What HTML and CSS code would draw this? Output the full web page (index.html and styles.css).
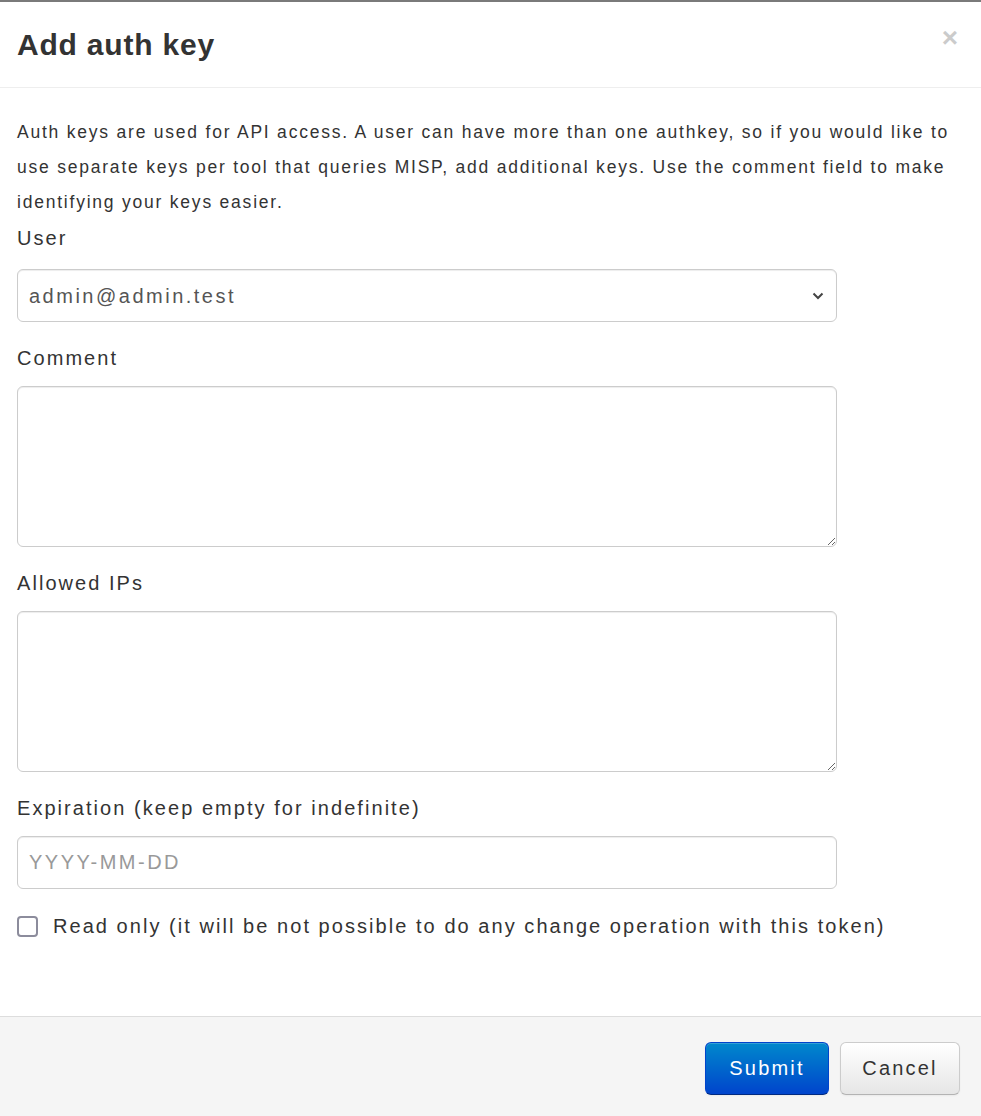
FILE: index.html
```html
<!DOCTYPE html>
<html lang="en">
<head>
    <meta charset="UTF-8">
    <meta name="viewport" content="width=device-width, initial-scale=1.0">
    <title>Add auth key</title>
    <link rel="stylesheet" href="styles.css">
</head>
<body>
    <div class="modal">
        <div class="modal-header">
            <h3>Add auth key</h3>
            <button type="button" class="close">×</button>
        </div>
        <div class="modal-body">
            <p class="intro">Auth keys are used for API access. A user can have more than one authkey, so if you would like to use separate keys per tool that queries MISP, add additional keys. Use the comment field to make identifying your keys easier.</p>
            <form>
                <label for="user">User</label>
                <div class="select-wrap">
                    <select id="user" class="field">
                        <option>admin@admin.test</option>
                    </select>
                    <svg class="chevron" width="12" height="8" viewBox="0 0 12 8">
                        <path d="M1.5 1.5 L6 6 L10.5 1.5" fill="none" stroke="#444" stroke-width="2"/>
                    </svg>
                </div>

                <label for="comment">Comment</label>
                <textarea id="comment" class="field area"></textarea>

                <label for="ips">Allowed IPs</label>
                <textarea id="ips" class="field area"></textarea>

                <label for="expiration">Expiration (keep empty for indefinite)</label>
                <input id="expiration" class="field" type="text" placeholder="YYYY-MM-DD">

                <label class="checkbox">
                    <input type="checkbox">
                    Read only (it will be not possible to do any change operation with this token)
                </label>
            </form>
        </div>
        <div class="modal-footer">
            <button type="button" class="btn btn-primary">Submit</button>
            <button type="button" class="btn btn-cancel">Cancel</button>
        </div>
    </div>
</body>
</html>
```

FILE: styles.css
```css
body {
    margin: 0;
    font-family: "Liberation Sans", Arial, sans-serif;
    color: #333333;
    background-color: #ffffff;
}

.modal {
    border-top: 2px solid #7a7a7a;
    min-height: 1114px;
    display: flex;
    flex-direction: column;
}

.modal-header {
    height: 85px;
    padding: 0 17px;
    border-bottom: 1px solid #eeeeee;
    display: flex;
    align-items: center;
    justify-content: space-between;
}

.modal-header h3 {
    margin: 0;
    font-size: 30px;
    font-weight: bold;
    line-height: 40px;
    letter-spacing: 0.8px;
    color: #333333;
}

.close {
    border: none;
    background: none;
    padding: 0;
    margin-right: 6px;
    margin-top: -14px;
    font-family: "Liberation Sans", Arial, sans-serif;
    font-size: 28px;
    font-weight: bold;
    line-height: 28px;
    color: #000000;
    opacity: 0.2;
}

.modal-body {
    padding: 27px 17px 0;
    flex: 1;
}

.intro {
    margin: 0;
    font-size: 17.5px;
    line-height: 35px;
    letter-spacing: 1.78px;
}

label {
    display: block;
    font-size: 20px;
    line-height: 28px;
    letter-spacing: 2.05px;
}

label[for="user"] {
    margin-top: 4px;
    margin-bottom: 17px;
}

label[for="comment"],
label[for="ips"],
label[for="expiration"] {
    margin-top: 22px;
    margin-bottom: 14px;
}

.select-wrap {
    position: relative;
    width: 820px;
}

.chevron {
    position: absolute;
    right: 13px;
    top: 23px;
    pointer-events: none;
}

.field {
    display: block;
    box-sizing: border-box;
    width: 820px;
    height: 53px;
    margin: 0;
    padding: 6px 11px;
    border: 1px solid #cccccc;
    border-radius: 6px;
    background-color: #ffffff;
    font-family: "Liberation Sans", Arial, sans-serif;
    font-size: 20px;
    letter-spacing: 2.5px;
    color: #555555;
    box-shadow: inset 0 1px 1px rgba(0, 0, 0, 0.075);
}

select.field {
    appearance: none;
    -webkit-appearance: none;
}

.field::placeholder {
    color: #999999;
}

.area {
    height: 161px;
    resize: vertical;
}

.checkbox {
    margin-top: 23px;
    display: flex;
    align-items: center;
    gap: 15px;
}

.checkbox input {
    appearance: none;
    -webkit-appearance: none;
    flex: none;
    margin: 0;
    width: 21px;
    height: 21px;
    border: 2px solid #8c8c9c;
    border-radius: 4px;
    background-color: #ffffff;
}

.modal-footer {
    height: 100px;
    box-sizing: border-box;
    padding: 25px 21px 0;
    border-top: 1px solid #dddddd;
    background-color: #f5f5f5;
    display: flex;
    justify-content: flex-end;
    align-items: flex-start;
    gap: 11px;
}

.btn {
    height: 53px;
    padding: 0;
    border: 1px solid #cccccc;
    border-bottom-color: #b3b3b3;
    border-radius: 6px;
    font-family: "Liberation Sans", Arial, sans-serif;
    font-size: 20px;
    letter-spacing: 2.2px;
    color: #333333;
    background-image: linear-gradient(to bottom, #ffffff, #e6e6e6);
    box-shadow: inset 0 1px 0 rgba(255, 255, 255, 0.2), 0 1px 2px rgba(0, 0, 0, 0.05);
}

.btn-primary {
    width: 124px;
    color: #ffffff;
    border-color: #0044cc #0044cc #002a80;
    background-image: linear-gradient(to bottom, #0088cc, #0044cc);
}

.btn-cancel {
    width: 120px;
}
```
